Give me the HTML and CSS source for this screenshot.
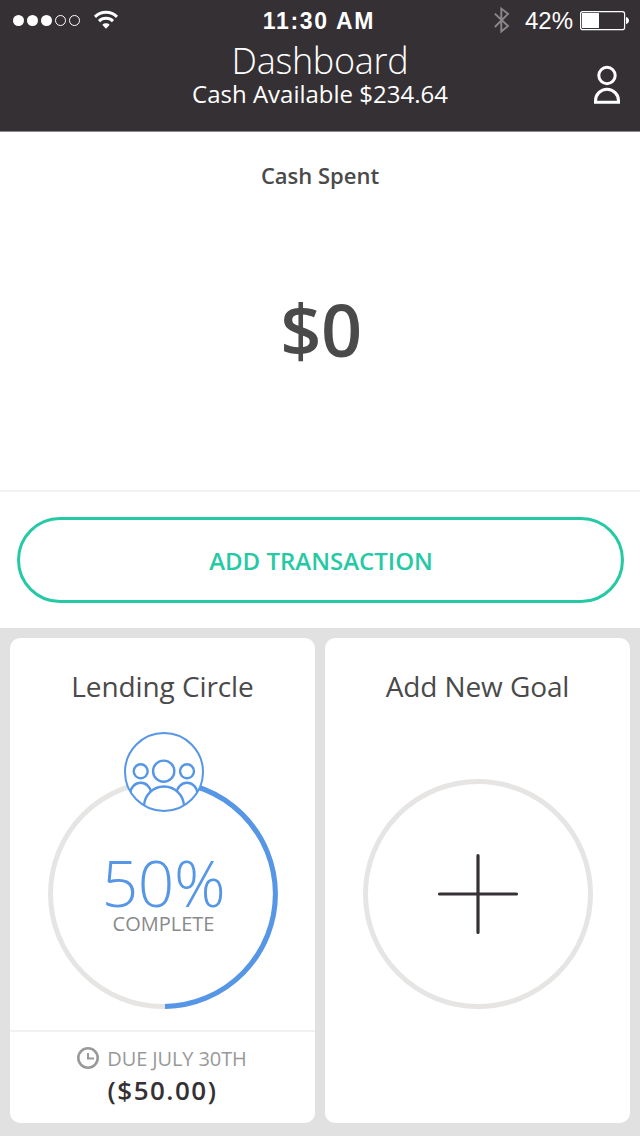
FILE: index.html
```html
<!DOCTYPE html>
<html lang="en">
<head>
<meta charset="utf-8">
<title>Dashboard</title>
<link rel="stylesheet" href="styles.css">
</head>
<body>
<header class="header">
  <div class="status">
    <div class="status-left">
      <svg width="108" height="42" viewBox="12 0 108 42">
        <g fill="#fff"><circle cx="18.5" cy="20.5" r="5.5"/><circle cx="32.5" cy="20.5" r="5.5"/><circle cx="46.5" cy="20.5" r="5.5"/></g>
        <g fill="none" stroke="#fff" stroke-width="1"><circle cx="60.5" cy="20.5" r="5"/><circle cx="74.5" cy="20.5" r="5"/></g>
        <g fill="none" stroke="#fff" stroke-width="3"><path d="M95 16.8a15.8 15.8 0 0 1 22 0"/><path d="M99 21.1a10 10 0 0 1 14 0"/></g>
        <path d="M102.3 24.8a5.4 5.4 0 0 1 7.4 0L106 28.8z" fill="#fff"/>
      </svg>
    </div>
    <div class="time">11:30 AM</div>
    <div class="status-right">
      <svg width="18" height="42" viewBox="493 0 18 42"><path d="M494.8 13.6L508 26l-6.7 5.4V8.6l6.7 5.2L494.8 27" fill="none" stroke="#8b888a" stroke-width="1.9"/></svg>
      <span class="percent">42%</span>
      <svg width="50" height="42" viewBox="580 0 50 42"><rect x="580.6" y="11.6" width="44" height="18" rx="2.2" fill="none" stroke="#fff" stroke-width="1.2"/><path d="M582 13h17v15h-17zM626 17c4 1 4 6 0 7z" fill="#fff"/></svg>
    </div>
  </div>
  <div class="title-row">
    <div class="titles">
      <h1 class="title">Dashboard</h1>
      <div class="available">Cash Available $234.64</div>
    </div>
    <svg class="user" width="28" height="40" viewBox="593 65 28 40"><g fill="none" stroke="#fff" stroke-width="3"><circle cx="607" cy="75.5" r="8.2"/><path d="M595.5 102.3v-1.5a11.5 11.5 0 0 1 23 0v1.5z"/></g></svg>
  </div>
</header>
<section class="spent">
  <h2 class="spent-label">Cash Spent</h2>
  <div class="spent-value">$0</div>
</section>
<section class="action"><button class="add">ADD TRANSACTION</button></section>
<main class="goals">
  <article class="card">
    <h3 class="card-title">Lending Circle</h3>
    <div class="goal">
      <svg class="ring" width="235" height="282" viewBox="45 730 235 282" fill="none">
        <circle cx="163" cy="894" r="112.5" stroke="#e6e5e4" stroke-width="5"/>
        <path d="M163 781.5A112.5 112.5 0 0 1 165 1006.48" stroke="#5596e6" stroke-width="5"/>
        <circle cx="164" cy="772" r="39" fill="#fff"/>
        <clipPath id="badge"><circle cx="164" cy="772" r="39"/></clipPath>
        <g clip-path="url(#badge)" stroke="#5596e6" stroke-width="2.4">
          <circle cx="140.7" cy="771.3" r="7"/><circle cx="187" cy="771.3" r="7"/><circle cx="163.7" cy="771.2" r="10.6"/>
          <path d="M130.5 793a10.2 10.2 0 0 1 20.4 0M176.8 793a10.2 10.2 0 0 1 20.4 0"/>
          <path d="M144 812v-5.5a20 20 0 0 1 40 0V812" fill="#fff"/>
        </g>
        <circle cx="164" cy="772" r="39" stroke="#5596e6" stroke-width="2"/>
      </svg>
      <div class="progress"><div class="amount">50%</div><div class="complete">COMPLETE</div></div>
    </div>
    <footer class="due">
      <div class="due-date"><svg width="24" height="24" viewBox="76 1045 24 24" fill="none"><circle cx="88" cy="1058" r="9.7" stroke="#999" stroke-width="2.6"/><path d="M88 1053v5.5h6" stroke="#999" stroke-width="2"/></svg><span class="due-text">DUE JULY 30TH</span></div>
      <div class="due-amount">($50.00)</div>
    </footer>
  </article>
  <article class="card">
    <h3 class="card-title">Add New Goal</h3>
    <div class="goal">
      <svg class="ring" width="235" height="282" viewBox="360 730 235 282" fill="none"><circle cx="478" cy="894" r="112.5" stroke="#e6e5e4" stroke-width="5"/><path d="M439.5 894h77M478 855.5v77" stroke="#353134" stroke-width="3.2" stroke-linecap="round"/></svg>
    </div>
  </article>
</main>
</body>
</html>
```
FILE: styles.css
```css
* { box-sizing: border-box; }
body { margin: 0; width: 640px; height: 1136px; display: flex; flex-direction: column; background: #fff; color: #4a4a4a; font-family: "Open Sans", sans-serif; overflow: hidden; }
h1, h2, h3 { margin: 0; font-weight: 400; }
svg { display: block; flex: none; }
div, h1, h2, h3, span { white-space: nowrap; }
.header { height: 132px; background: #353034; color: #fff; border-bottom: 1px solid #89868a; }
.status { display: grid; grid-template-columns: 1fr auto 1fr; height: 42px; padding: 0 10px 0 8px; font-family: "Liberation Sans", Arial, sans-serif; line-height: 42px; }
.status-left { padding-left: 4px; }
.time { font-size: 23px; font-weight: 700; letter-spacing: 1.7px; }
.status-right { display: flex; justify-content: flex-end; }
.percent { font-size: 24px; margin: 0 7px 0 14px; }
.title-row { display: grid; grid-template-columns: 1fr auto 1fr; padding-right: 19px; padding-left: 19px; }
.titles { grid-column: 2; text-align: center; }
.title { padding-top: 1px; font-size: 36px; line-height: 36px; font-weight: 300; letter-spacing: -0.3px; }
.available { font-size: 24px; line-height: 29px; }
.user { justify-self: end; margin-top: 23px; }
.spent { height: 360px; padding-top: 28px; text-align: center; border-bottom: 2px solid #f2f2f2; }
.spent-label { font-size: 22px; line-height: 30px; font-weight: 600; }
.spent-value { margin-top: 90px; padding-left: 2px; font-size: 72px; line-height: 98px; font-weight: 600; letter-spacing: -0.4px; }
.action { height: 136px; padding: 25px 16px 25px 17px; }
.add { display: block; width: 100%; height: 86px; padding: 2px 0 0 1px; border: 3px solid #25c9a3; border-radius: 43px; background: #fff; color: #25c9a3; font: 600 24px/32px "Open Sans", sans-serif; }
.goals { flex: 1; display: grid; grid-template-columns: 1fr 1fr; gap: 10px; padding: 10px 10px 13px; background: #e1e1e1; }
.card { display: flex; flex-direction: column; background: #fff; border-radius: 10px; padding-top: 28px; text-align: center; }
.card-title { font-size: 28px; line-height: 40px; letter-spacing: -0.1px; }
.goal { position: relative; height: 324px; padding: 24px 35px 0; }
.progress { position: absolute; top: 140px; left: 0; width: 100%; padding-left: 2px; }
.amount { font-size: 64px; line-height: 74px; font-weight: 300; letter-spacing: -0.4px; color: #5596e6; }
.complete { font-size: 20px; line-height: 8px; color: #8a8a8a; }
.due { height: 93px; border-top: 2px solid #f2f2f2; padding-top: 13px; }
.due-date { display: flex; justify-content: center; gap: 7px; height: 27px; padding-right: 2px; font-size: 20px; line-height: 27px; letter-spacing: -0.1px; color: #999; }
.due-amount { font-size: 26px; line-height: 36px; font-weight: 600; letter-spacing: 1.5px; color: #353034; }
```
